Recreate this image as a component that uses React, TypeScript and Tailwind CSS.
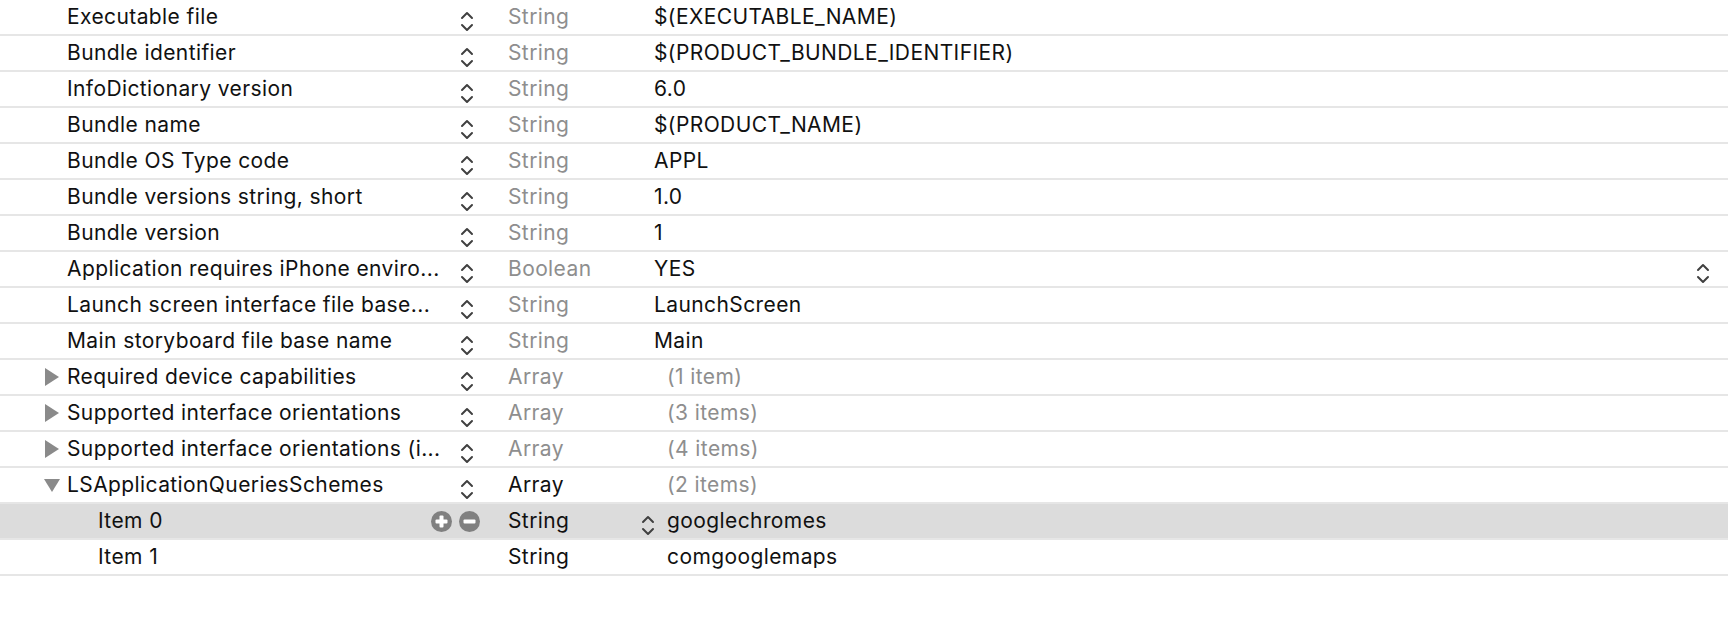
import React from "react"

type Row = {
  key: string
  type: string
  value: string
  disclosure?: "closed" | "open"
  child?: boolean
  selected?: boolean
  stepper?: boolean
  valueStepper?: boolean
  rightStepper?: boolean
  muted?: boolean
  count?: boolean
}

const rows: Row[] = [
  { key: "Executable file", type: "String", value: "$(EXECUTABLE_NAME)", stepper: true, muted: true },
  { key: "Bundle identifier", type: "String", value: "$(PRODUCT_BUNDLE_IDENTIFIER)", stepper: true, muted: true },
  { key: "InfoDictionary version", type: "String", value: "6.0", stepper: true, muted: true },
  { key: "Bundle name", type: "String", value: "$(PRODUCT_NAME)", stepper: true, muted: true },
  { key: "Bundle OS Type code", type: "String", value: "APPL", stepper: true, muted: true },
  { key: "Bundle versions string, short", type: "String", value: "1.0", stepper: true, muted: true },
  { key: "Bundle version", type: "String", value: "1", stepper: true, muted: true },
  { key: "Application requires iPhone enviro...", type: "Boolean", value: "YES", stepper: true, muted: true, rightStepper: true },
  { key: "Launch screen interface file base...", type: "String", value: "LaunchScreen", stepper: true, muted: true },
  { key: "Main storyboard file base name", type: "String", value: "Main", stepper: true, muted: true },
  { key: "Required device capabilities", type: "Array", value: "(1 item)", disclosure: "closed", stepper: true, muted: true, count: true },
  { key: "Supported interface orientations", type: "Array", value: "(3 items)", disclosure: "closed", stepper: true, muted: true, count: true },
  { key: "Supported interface orientations (i...", type: "Array", value: "(4 items)", disclosure: "closed", stepper: true, muted: true, count: true },
  { key: "LSApplicationQueriesSchemes", type: "Array", value: "(2 items)", disclosure: "open", stepper: true, count: true },
  { key: "Item 0", type: "String", value: "googlechromes", child: true, selected: true, valueStepper: true },
  { key: "Item 1", type: "String", value: "comgooglemaps", child: true },
]

const Stepper = () => (
  <svg width="14" height="24" viewBox="0 0 14 24" className="mt-2 shrink-0">
    <polyline points="2,9 7,4 12,9" fill="none" stroke="#404040" strokeWidth="2" strokeLinecap="round" strokeLinejoin="round" />
    <polyline points="2,16 7,21 12,16" fill="none" stroke="#404040" strokeWidth="2" strokeLinecap="round" strokeLinejoin="round" />
  </svg>
)

const Triangle = ({ open }: { open: boolean }) =>
  open ? (
    <svg width="16" height="16" viewBox="0 0 16 16" className="shrink-0">
      <polygon points="0,2 16,2 8,15" fill="#8a8a8a" />
    </svg>
  ) : (
    <svg width="16" height="18" viewBox="0 0 16 18" className="shrink-0">
      <polygon points="1,0 15,9 1,18" fill="#8a8a8a" />
    </svg>
  )

const RoundButton = ({ plus }: { plus?: boolean }) => (
  <svg width="21" height="21" viewBox="0 0 21 21" className="shrink-0">
    <circle cx="10.5" cy="10.5" r="10.5" fill="#808080" />
    <rect x="4.5" y="8.5" width="12" height="4" rx="1" fill="#ffffff" />
    {plus && <rect x="8.5" y="4.5" width="4" height="12" rx="1" fill="#ffffff" />}
  </svg>
)

const PlistRow = ({ row }: { row: Row }) => (
  <div
    className={`flex h-[36px] items-center border-b-2 border-[#e6e6e6] text-[21px] leading-[26px] tracking-[0.4px] ${
      row.selected ? "bg-[#dcdcdc]" : "bg-white"
    }`}
  >
    <div className={`flex w-[430px] shrink-0 items-center whitespace-nowrap ${row.child ? "pl-[98px]" : "pl-[44px]"}`}>
      {!row.child && (
        <div className="flex w-[23px] shrink-0 items-center">
          {row.disclosure && <Triangle open={row.disclosure === "open"} />}
        </div>
      )}
      <span className="text-[#111111]">{row.key}</span>
    </div>
    <div className="flex h-full w-[78px] shrink-0 items-center">
      {row.stepper && (
        <div className="ml-[30px] flex h-full items-center">
          <Stepper />
        </div>
      )}
      {row.selected && (
        <div className="ml-[1px] flex items-center gap-[7px]">
          <RoundButton plus />
          <RoundButton />
        </div>
      )}
    </div>
    <div className={`w-[133px] shrink-0 ${row.muted ? "text-[#8e8e8e]" : "text-[#111111]"}`}>{row.type}</div>
    <div className="flex h-full w-[13px] shrink-0 items-center justify-center">{row.valueStepper && <Stepper />}</div>
    <div className={`whitespace-nowrap ${row.count ? "pl-[13px] text-[#8e8e8e]" : row.child ? "pl-[13px] text-[#111111]" : "text-[#111111]"}`}>
      {row.value}
    </div>
    {row.rightStepper && (
      <div className="ml-auto mr-[18px] flex h-full items-center">
        <Stepper />
      </div>
    )}
  </div>
)

export default function App() {
  return (
    <div className="h-[640px] w-[1728px] overflow-hidden bg-white font-['Inter','Liberation_Sans',sans-serif]">
      {rows.map((row) => (
        <PlistRow key={row.key} row={row} />
      ))}
    </div>
  )
}
